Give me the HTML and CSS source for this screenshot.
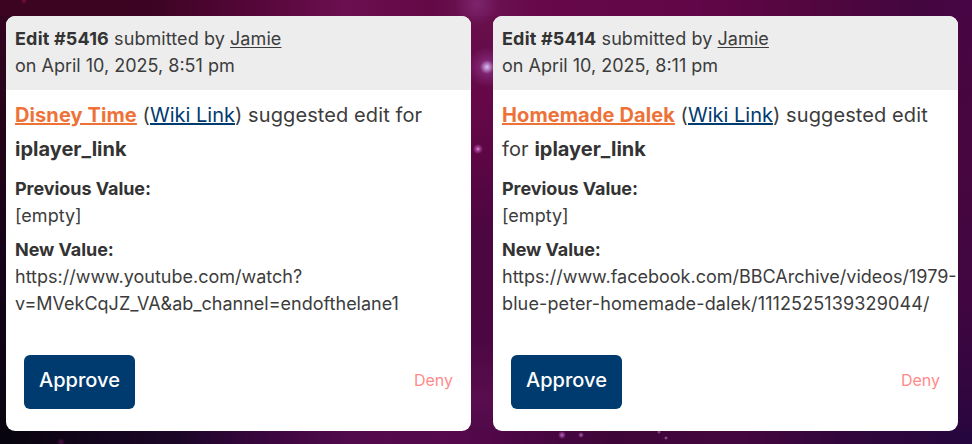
FILE: index.html
```html
<!DOCTYPE html>
<html lang="en">
<head>
  <meta charset="UTF-8">
  <meta name="viewport" content="width=device-width, initial-scale=1.0">
  <title>Suggested Edits</title>
  <link rel="stylesheet" href="styles.css">
</head>
<body>
  <main class="edits">
    <article class="edit-card">
      <header class="edit-header">
        <div class="submitter"><strong>Edit #5416</strong> submitted by <a href="#" class="user-link">Jamie</a></div>
        <div class="date">on April 10, 2025, 8:51 pm</div>
      </header>
      <div class="edit-body">
        <h2 class="edit-title"><a href="#" class="story-link">Disney Time</a> (<a href="#" class="wiki-link">Wiki Link</a>) suggested edit for<br><strong>iplayer_link</strong></h2>
        <p class="edit-value"><strong>Previous Value:</strong><br>[empty]</p>
        <p class="edit-value"><strong>New Value:</strong><br>https://www.youtube.com/watch?<br>v=MVekCqJZ_VA&amp;ab_channel=endofthelane1</p>
      </div>
      <div class="edit-actions">
        <button class="approve">Approve</button>
        <a href="#" class="deny">Deny</a>
      </div>
    </article>
    <article class="edit-card">
      <header class="edit-header">
        <div class="submitter"><strong>Edit #5414</strong> submitted by <a href="#" class="user-link">Jamie</a></div>
        <div class="date">on April 10, 2025, 8:11 pm</div>
      </header>
      <div class="edit-body">
        <h2 class="edit-title"><a href="#" class="story-link">Homemade Dalek</a> (<a href="#" class="wiki-link">Wiki Link</a>) suggested edit<br>for <strong>iplayer_link</strong></h2>
        <p class="edit-value"><strong>Previous Value:</strong><br>[empty]</p>
        <p class="edit-value"><strong>New Value:</strong><br>https://www.facebook.com/BBCArchive/videos/1979-<br><span class="url-slug">blue-peter-homemade-dalek/1112525139329044/</span></p>
      </div>
      <div class="edit-actions">
        <button class="approve">Approve</button>
        <a href="#" class="deny">Deny</a>
      </div>
    </article>
  </main>
</body>
</html>
```
FILE: styles.css
```css
* {
  box-sizing: border-box;
}
body {
  margin: 0;
  height: 444px;
  overflow: hidden;
  font-family: Inter, sans-serif;
  font-size: 18px;
  line-height: 27px;
  color: #3c3c3c;
  background-color: #480640;
  /* stars first, then the nebula along each edge */
  background-image:
    radial-gradient(circle at 487px 67px, #d9c4ec 0, #b47cc0 3px, rgba(140, 50, 135, 0.6) 7px, transparent 20px),
    radial-gradient(circle at 478px 149px, #e090d0 0, #a03c90 2px, transparent 5px),
    radial-gradient(circle at 562px 435px, #c070c0 0, #8c3c8c 1.5px, transparent 4px),
    radial-gradient(circle at 581px 435px, #c070c0 0, #8c3c8c 1px, transparent 3px),
    radial-gradient(circle at 659px 432px, #a8629c 0, transparent 2px),
    radial-gradient(circle at 666px 438px, #b070a0 0, transparent 2px),
    radial-gradient(circle at 24px 1px, #80103c 0, transparent 3px),
    radial-gradient(circle at 61px 442px, #501048 0, transparent 4px),
    radial-gradient(circle at 477px 4px, #7c246c 0, transparent 22px),
    linear-gradient(90deg, #3c0420 0, #3c0422 150px, #540638 250px, #6c0f50 345px, #640846 430px, #6c1454 475px, #66084a 540px, #620648 690px, #50063e 830px, #44063f 910px, #470545 972px),
    linear-gradient(90deg, #06040e 0, #100416 60px, #1c0628 180px, #3c0640 270px, #520a4c 350px, #56084c 460px, #480642 540px, #3e0638 610px, #44063e 740px, #30063c 850px, #26063e 972px),
    linear-gradient(180deg, #340420 0, #220418 160px, #16041a 250px, #08040f 444px),
    linear-gradient(180deg, #68104c 0, #660848 100px, #5c0644 160px, #4c0640 230px, #4c0742 340px, #590d4e 400px, #4c0846 444px),
    linear-gradient(180deg, #470543 0, #48063f 150px, #400641 300px, #28063e 444px);
  background-repeat: no-repeat;
  background-position: 0 0, 0 0, 0 0, 0 0, 0 0, 0 0, 0 0, 0 0, 0 0, 0 0, 0 431px, 0 0, 464px 0, 950px 0;
  background-size: auto, auto, auto, auto, auto, auto, auto, auto, auto, 100% 16px, 100% 13px, 14px 100%, 36px 100%, 22px 100%;
}
strong {
  color: #333;
  font-weight: 700;
  letter-spacing: 0;
}
.edits {
  display: grid;
  grid-template-columns: 465px 465px;
  gap: 22px;
  padding: 16px 0 0 6px;
}
.edit-card {
  display: flex;
  flex-direction: column;
  height: 415px;
  background: #fff;
  border-radius: 9px;
  overflow: hidden;
}
.edit-header {
  height: 74px;
  padding: 9px 9px;
  background: #ededed;
}
.submitter {
  letter-spacing: 0.08px;
}
.submitter strong {
  letter-spacing: 0.18px;
}
.user-link {
  color: #3c3c3c;
  text-underline-offset: 2px;
}
.edit-body {
  padding: 8px 9px 0;
}
.edit-title {
  margin: 0 0 9px;
  font-size: 20px;
  font-weight: 400;
  line-height: 34px;
  letter-spacing: 0.1px;
}
.edit-title a {
  text-decoration-thickness: 2px;
}
.story-link {
  color: #ee7238;
  font-weight: 700;
}
.wiki-link {
  color: #003b6f;
  letter-spacing: 0;
}
.edit-value {
  margin: 0 0 7px;
}
.edit-value strong {
  letter-spacing: -0.06px;
}
.url-slug {
  letter-spacing: 0.12px;
}
.edit-actions {
  display: flex;
  align-items: center;
  justify-content: space-between;
  margin-top: auto;
  padding: 0 18px 22px;
}
.approve {
  width: 111px;
  height: 54px;
  padding: 0 0 5px;
  border: 0;
  border-radius: 6px;
  background: #003b6f;
  color: #fff;
  font: 500 20px Inter, sans-serif;
}
.deny {
  color: #ff8a8a;
  font-size: 16px;
  text-decoration: none;
  padding-bottom: 3px;
}
```
